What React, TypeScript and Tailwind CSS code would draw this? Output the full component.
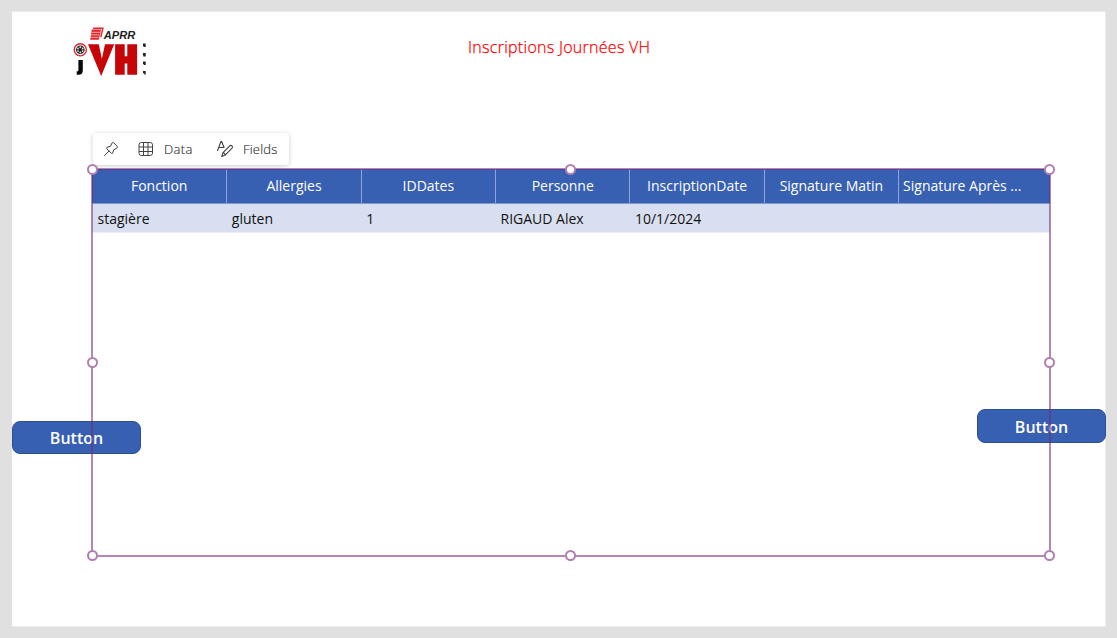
import React from "react";

const columns = [
  { title: "Fonction", value: "stagière" },
  { title: "Allergies", value: "gluten" },
  { title: "IDDates", value: "1" },
  { title: "Personne", value: "RIGAUD Alex" },
  { title: "InscriptionDate", value: "10/1/2024" },
  { title: "Signature Matin", value: "" },
  { title: "Signature Après ...", value: "" },
];

function Logo() {
  return (
    <svg width="80" height="56" viewBox="70 24 80 56" className="block" aria-label="APRR JVH">
      <g fill="#e3262b">
        <path d="M93.5 27.5h10.3l-2.3 9.8h-1.4l1.8-8.3h-9z" />
        <path d="M91.8 29.6h9.2l-2.2 10.2h-8.6z" />
      </g>
      <path d="M91.3 32.3h8.6M90.7 34.9h8.4M90.3 37.4h8.2" stroke="#fff" strokeWidth=".6" />
      <text x="103.8" y="39" fontFamily="Liberation Sans, sans-serif" fontSize="11.5" fontWeight="700" fontStyle="italic" fill="#222" textLength="31.5" lengthAdjust="spacingAndGlyphs">APRR</text>
      <circle cx="80.3" cy="49.8" r="6.1" fill="#fff" stroke="#d92b2e" strokeWidth="1.4" />
      <circle cx="80.3" cy="49.8" r="4.3" fill="#222" />
      <g fill="#e8e8e8">
        <circle cx="80.3" cy="47.2" r=".9" /><circle cx="80.3" cy="52.4" r=".9" />
        <circle cx="78" cy="48.5" r=".9" /><circle cx="82.6" cy="48.5" r=".9" />
        <circle cx="78" cy="51.1" r=".9" /><circle cx="82.6" cy="51.1" r=".9" />
      </g>
      <path d="M78.4 60h4.4v10.5q0 4.2-4.2 4.2h-1.9v-3.4h.6q1.1 0 1.1-1.3z" fill="#080808" />
      <path d="M88 44.2h10.8l3.1 14.5L105 44.2h9.2L101.2 76z" fill="#c60508" />
      <path d="M115.1 44.2h9.6v12h2.6v-12h9.8v30.5h-9.8V63.5h-2.6v11.2h-9.6z" fill="#c60508" />
      <g fill="#222">
        <path d="M143 43.5h2.7v3.6h-1.6v-.6H143zM143 53h2.7v3.4h-2.4v-1.2h-.3zM143 61.5h2.7v3.5h-1.8v-.7H143zM143 71h2.7v3.4h-1.5v-1.1H143z" />
      </g>
    </svg>
  );
}

function PinIcon() {
  return (
    <svg width="16" height="16" viewBox="0 0 16 16" fill="none" stroke="#424242" strokeWidth="1" strokeLinejoin="round" strokeLinecap="round" className="shrink-0">
      <path d="M9.2 1.8 Q9.8 1 10.7 1.8 L14.3 5.4 Q15 6.2 14.2 6.8 L10.7 8.9 L9.6 12.2 Q9.2 13 8.5 12.4 L3.7 7.6 Q3 6.8 3.9 6.4 L7.2 5.3 Z M6 10 L1.5 14.5" />
    </svg>
  );
}

function GridIcon() {
  return (
    <svg width="16" height="16" viewBox="0 0 16 16" fill="none" stroke="#424242" strokeWidth="1" className="shrink-0">
      <rect x="1" y="1.5" width="13.5" height="13" rx="2.3" />
      <path d="M5.5 1.5v13M10 1.5v13M1 6h13.5M1 10.5h13.5" />
    </svg>
  );
}

function FieldsIcon() {
  return (
    <svg width="18" height="18" viewBox="0 0 18 18" fill="none" stroke="#424242" strokeWidth="1.1" strokeLinecap="round" strokeLinejoin="round" className="shrink-0">
      <path d="M1.5 10.5 5 1.5h.7L8 7.5M2.8 7.5h5" />
      <path d="m5.8 16.5 1-3.7 7-7q1.2-.9 2.2.1t.1 2.2l-7 7zM6.8 12.8q2-.2 2.3 2.4" />
    </svg>
  );
}

function Toolbar() {
  return (
    <div className="ml-[81px] flex h-[32px] w-[196px] items-center rounded-[3px] bg-white pl-[10px] text-[13px] text-[#303030] shadow-[0_1px_5px_rgba(0,0,0,0.2)]">
      <PinIcon />
      <span className="ml-[19px] flex"><GridIcon /></span>
      <span className="ml-[10px] w-[30px] pt-px font-light tracking-[0.4px] [-webkit-text-stroke:0.15px_#303030]">Data</span>
      <span className="ml-[21.5px] flex"><FieldsIcon /></span>
      <span className="ml-[9.5px] pt-px font-light tracking-[0.2px] [-webkit-text-stroke:0.15px_#303030]">Fields</span>
    </div>
  );
}

function Handle({ place }: { place: string }) {
  return <span className={`absolute size-[11px] rounded-full border-2 border-[#b07fb0] bg-white ${place}`} />;
}

function Selection() {
  return (
    <div className="pointer-events-none absolute -left-px -top-px z-20 h-[389px] w-[960px] border-2 border-[#742774]/55">
      <Handle place="-left-[6px] -top-[6px]" />
      <Handle place="left-[472px] -top-[6px]" />
      <Handle place="left-[951px] -top-[6px]" />
      <Handle place="-left-[6px] top-[187px]" />
      <Handle place="left-[951px] top-[187px]" />
      <Handle place="-left-[6px] top-[380px]" />
      <Handle place="left-[472px] top-[380px]" />
      <Handle place="left-[951px] top-[380px]" />
    </div>
  );
}

function CanvasButton({ place }: { place: string }) {
  return (
    <button className={`absolute z-10 rounded-[8px] border-[1.5px] border-[#2c4f91] bg-[#3860b2] text-[16px] font-semibold leading-none text-white ${place}`}>
      Button
    </button>
  );
}

export default function App() {
  return (
    <div className="h-[638px] w-[1117px] overflow-hidden bg-[#e0e0e0] pl-[12px] pt-[11px] font-['Open_Sans',sans-serif]">
      <main className="relative h-[616px] w-[1094px] border border-l-0 border-[#ececec] bg-white">
        <header className="flex h-[121px] items-start pl-[58px] pt-[12px]">
          <Logo />
          <h1 className="ml-[318px] mt-[11px] whitespace-nowrap text-[16px] font-light leading-[24px] tracking-[0.28px] text-[#ff0000] [-webkit-text-stroke:0.25px_#ff0000]">Inscriptions Journées VH</h1>
        </header>
        <Toolbar />
        <section className="relative ml-[80px] mt-[4px] h-[387px] w-[958px]">
          <div className="flex h-[34px] bg-[#3860b2] text-[14px] text-white">
            {columns.map((c, i) => (
              <div key={c.title} className={`flex w-[134.35px] shrink-0 items-center whitespace-nowrap pb-[2px] ${i ? "border-l border-[#8fa5d3]" : ""} ${i === 6 ? "pl-[4px]" : "justify-center"}`}>
                {c.title}
              </div>
            ))}
          </div>
          <div className="flex h-[30px] border-b border-t border-b-[#eceff8] border-t-[#8297ce] bg-[#d8dff0] text-[14px] text-[#111]">
            {columns.map((c) => (
              <div key={c.title} className="flex w-[134.35px] shrink-0 items-center whitespace-nowrap pl-[5.5px]">
                {c.value}
              </div>
            ))}
          </div>
          <Selection />
        </section>
        <CanvasButton place="left-0 top-[409px] h-[33px] w-[129px]" />
        <CanvasButton place="left-[965px] top-[397px] h-[34px] w-[129px] pt-px" />
      </main>
    </div>
  );
}
